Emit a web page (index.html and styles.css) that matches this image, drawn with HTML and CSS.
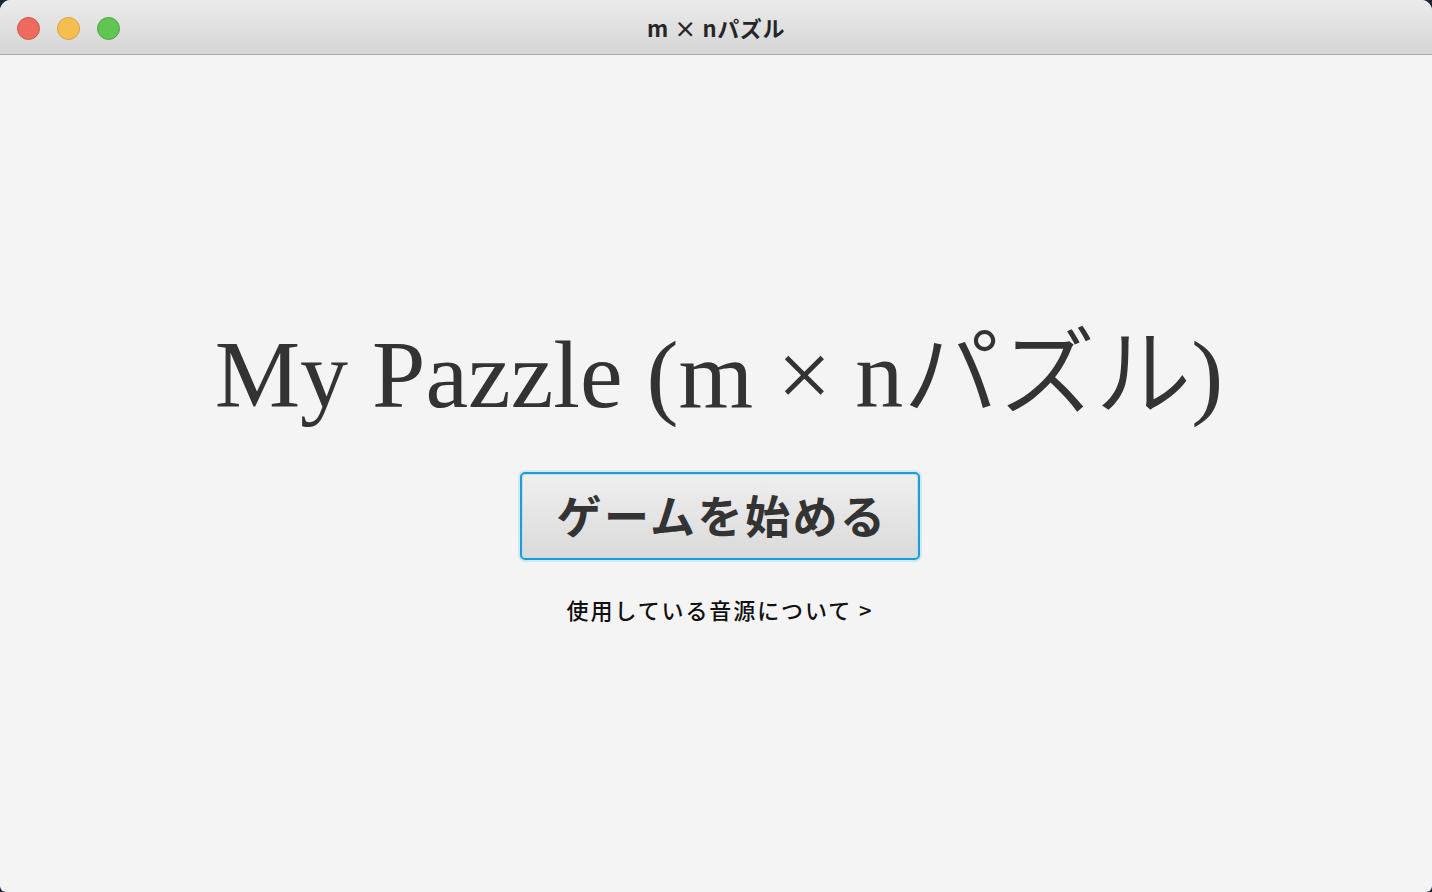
FILE: index.html
```html
<!DOCTYPE html>
<html lang="ja">
<head>
<meta charset="utf-8">
<title>m × nパズル</title>
<link rel="stylesheet" href="styles.css">
</head>
<body>
<div class="window">
  <div class="titlebar">
    <div class="lights">
      <span class="light red"></span>
      <span class="light yellow"></span>
      <span class="light green"></span>
    </div>
    <div class="title">m × nパズル</div>
  </div>
  <main class="content">
    <h1 class="heading">My Pazzle (m × n<span class="jp">パズル</span>)</h1>
    <button class="start">ゲームを始める</button>
    <a class="credits" href="#">使用している音源について &gt;</a>
  </main>
</div>
</body>
</html>
```
FILE: styles.css
```css
html, body {
  margin: 0;
  padding: 0;
  width: 1432px;
  height: 892px;
  overflow: hidden;
  background: #1b2433;
}
.window {
  width: 1432px;
  height: 892px;
  display: flex;
  flex-direction: column;
  border-radius: 11px 11px 6px 6px;
  overflow: hidden;
  background: #f4f4f4;
}
.titlebar {
  position: relative;
  height: 54px;
  flex: none;
  background: linear-gradient(#ebebeb, #d5d5d5);
  border-bottom: 1px solid #aeaeae;
  display: flex;
  align-items: center;
  justify-content: center;
}
.lights {
  position: absolute;
  left: 17px;
  top: 17px;
  display: flex;
  gap: 17px;
}
.light {
  width: 23px;
  height: 23px;
  border-radius: 50%;
  box-sizing: border-box;
}
.red { background: #ee6a5f; border: 1px solid #d5544a; }
.yellow { background: #f5bf4f; border: 1px solid #d9a23a; }
.green { background: #61c554; border: 1px solid #4ca73f; }
.title {
  font-family: "Noto Sans CJK JP", "Noto Sans", sans-serif;
  font-weight: 700;
  font-size: 22px;
  color: #262626;
  letter-spacing: 0.6px;
}
.content {
  flex: 1;
  display: flex;
  flex-direction: column;
  align-items: center;
  padding-top: 256px;
  padding-left: 6px;
}
.heading {
  margin: 0;
  font-family: "Liberation Serif", "Noto Sans CJK JP", serif;
  font-weight: 400;
  font-size: 96px;
  line-height: 110px;
  color: #333333;
  white-space: nowrap;
}
.heading .jp {
  font-family: "Noto Sans CJK JP", sans-serif;
  font-weight: 350;
}
.start {
  margin-top: 42px;
  margin-left: 2px;
  width: 400px;
  height: 88px;
  box-sizing: border-box;
  border: 2px solid #1a9edb;
  border-radius: 5px;
  box-shadow: 0 0 0 2px #d3e8f3, inset 0 0 0 1px #c9dde9;
  background: linear-gradient(#efefef, #dadada);
  font-family: "Noto Sans CJK JP", sans-serif;
  font-weight: 700;
  font-size: 45px;
  letter-spacing: 2.5px;
  color: #333333;
  padding: 0 0 4px 4px;
  cursor: pointer;
}
.credits {
  margin-top: 33px;
  margin-left: 2px;
  font-family: "Noto Sans CJK JP", sans-serif;
  font-weight: 500;
  font-size: 22px;
  letter-spacing: 1.9px;
  color: #111111;
  text-decoration: none;
}
```
